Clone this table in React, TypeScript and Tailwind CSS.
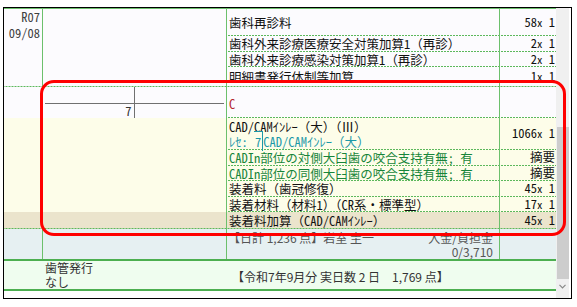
import React from "react";

const mono = "font-['Noto_Sans_Mono_CJK_JP','Noto_Sans_CJK_JP',monospace]";
const dash =
  "bg-[linear-gradient(90deg,#5cb85c_2px,transparent_2px)] bg-[length:3px_1px] bg-repeat-x bg-bottom";

type ItemProps = {
  value?: React.ReactNode;
  h: string;
  dashed?: boolean;
  tone?: string;
  children: React.ReactNode;
};

function Item({ value, h, dashed = true, tone = "text-[#111]", children }: ItemProps) {
  return (
    <div className={`flex ${h} ${dashed ? dash : ""}`}>
      <div
        className={`w-[273px] border-r border-[#6cc06c] pl-[2px] pb-px flex flex-col justify-center leading-[15px] whitespace-nowrap ${tone}`}
      >
        {children}
      </div>
      <div className="flex-1 pr-[1px] pb-px flex items-center justify-end text-[#111] whitespace-nowrap">
        {value}
      </div>
    </div>
  );
}

function Qty({ n }: { n: string }) {
  return (
    <span>
      {n}
      <span className="text-[11px]">x</span> 1
    </span>
  );
}

function ToothCross() {
  return (
    <div className="h-full px-[2px] grid grid-cols-2 grid-rows-[17px_1fr]">
      <div className="border-r border-b border-[#707070]" />
      <div className="border-b border-[#707070]" />
      <div className="border-r border-[#707070] flex items-start justify-end pr-[2px] text-[#333] leading-[13px]">
        7
      </div>
      <div />
    </div>
  );
}

export default function App() {
  return (
    <div className={`relative w-[577px] h-[307px] bg-white pt-[7px] pl-[3px] text-[12.5px] ${mono}`}>
      <div className="w-[569px] h-[292px] border border-black flex">
        {/* main list */}
        <div className="w-[552px] flex flex-col">
          <div className="h-px bg-[#6cc06c]" />

          {/* visit header rows */}
          <div className={`flex h-[78px] bg-[#fcfbfe] ${dash}`}>
            <div className="w-[39px] border-r border-[#6cc06c] pr-[2px] flex flex-col items-end leading-[16px] text-[#404040]">
              <span>R07</span>
              <span>09/08</span>
            </div>
            <div className="w-[184px] border-r border-[#6cc06c]" />
            <div className="flex-1 flex flex-col">
              <Item h="h-[31px]" value={<Qty n="58" />}>
                歯科再診料
              </Item>
              <Item h="h-[16px]" value={<Qty n="2" />}>
                歯科外来診療医療安全対策加算1（再診）
              </Item>
              <Item h="h-[15px]" value={<Qty n="2" />}>
                歯科外来診療感染対策加算1（再診）
              </Item>
              <Item h="flex-1" dashed={false} value={<Qty n="1" />}>
                明細書発行体制等加算
              </Item>
            </div>
          </div>

          {/* tooth row */}
          <div className="flex h-[31px] bg-[#fcfbfe]">
            <div className="w-[39px] border-r border-[#6cc06c]" />
            <div className="w-[184px] border-r border-[#6cc06c]">
              <ToothCross />
            </div>
            <div className="flex-1 flex flex-col">
              <Item h="h-full" tone="text-[#b3262b] pt-[3px]">
                C
              </Item>
            </div>
          </div>

          {/* treatment rows */}
          <div className="flex h-[94px] bg-[#fdfde9]">
            <div className="w-[39px] border-r border-[#6cc06c]" />
            <div className="w-[184px] border-r border-[#6cc06c]" />
            <div className="flex-1 flex flex-col">
              <Item h="h-[32px]" value={<Qty n="1066" />}>
                <span>CAD/CAMｲﾝﾚｰ（大）（Ⅲ）</span>
                <span className="text-[#1b98a8]">
                  ﾚｾ: <span className="border-t border-r border-[#1b98a8] leading-[12px] px-[1px]">7</span>
                  CAD/CAMｲﾝﾚｰ（大）
                </span>
              </Item>
              <Item h="h-[16px]" tone="text-[#17853a]" value="摘要">
                CADIn部位の対側大臼歯の咬合支持有無; 有
              </Item>
              <Item h="h-[15px]" tone="text-[#17853a]" value="摘要">
                CADIn部位の同側大臼歯の咬合支持有無; 有
              </Item>
              <Item h="h-[16px]" value={<Qty n="45" />}>
                装着料（歯冠修復）
              </Item>
              <Item h="h-[15px]" value={<Qty n="17" />}>
                装着材料（材料1）（CR系・標準型）
              </Item>
            </div>
          </div>
          <div className={`flex h-[17px] bg-[#ebe4cc] ${dash}`}>
            <div className="w-[39px] border-r border-[#6cc06c]" />
            <div className="w-[184px] border-r border-[#6cc06c]" />
            <div className="flex-1 flex flex-col">
              <Item h="h-full" dashed={false} value={<Qty n="45" />}>
                装着料加算（CAD/CAMｲﾝﾚｰ）
              </Item>
            </div>
          </div>

          {/* day total */}
          <div className="flex h-[32px] bg-[#e6f0f2] border-b-2 border-[#4caf50]">
            <div className="w-[39px] border-r border-[#6cc06c]" />
            <div className="w-[184px] border-r border-[#6cc06c]" />
            <div className="w-[273px] border-r border-[#6cc06c] pl-[1px] pr-[6px] pt-[2px] flex flex-col leading-[14px] text-[#555] font-['Noto_Sans_CJK_JP',sans-serif] text-[12px]">
              <div className="flex justify-between">
                <span>【日計 1,236 点】岩室 圭一</span>
                <span>入金/負担金</span>
              </div>
              <div className="text-right">0/3,710</div>
            </div>
            <div className="flex-1" />
          </div>

          {/* month summary */}
          <div className="flex h-[30px] bg-[#effdef] border-b-2 border-[#4caf50] font-['Noto_Sans_CJK_JP',sans-serif] text-[12px] text-[#333]">
            <div className="w-[224px] pl-[41px] flex flex-col leading-[14px]">
              <span>歯管発行</span>
              <span>なし</span>
            </div>
            <div className="flex-1 pl-[4px] pt-[9px] leading-[14px] whitespace-nowrap">
              【令和7年9月分 実日数 2 日　1,769 点】
            </div>
          </div>

          <div className="flex-1 bg-white" />
        </div>

        {/* scrollbar */}
        <div className="w-[13px] bg-[#f0f0f0] flex flex-col">
          <div className="h-[119px]" />
          <div className="h-[152px] ml-px bg-[#cdcdcd]" />
          <div className="flex-1 flex items-start justify-center pt-[5px]">
            <svg width="7" height="5" viewBox="0 0 7 5">
              <path d="M0.5 0.8 L3.5 3.8 L6.5 0.8" fill="none" stroke="#888" strokeWidth="1.2" />
            </svg>
          </div>
        </div>
        <div className="w-[2px] bg-white" />
      </div>

      {/* highlight frame */}
      <div className="absolute left-[40px] top-[80px] w-[526px] h-[156px] border-[3px] border-[#ff0000] rounded-[14px] pointer-events-none" />
    </div>
  );
}
